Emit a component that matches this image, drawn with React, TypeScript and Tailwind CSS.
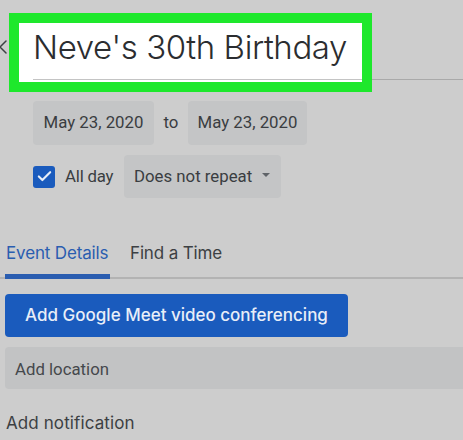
import React from "react";
import { Check, ChevronLeft } from "lucide-react";

const font = "font-['Roboto',sans-serif]";
const heading = "font-['Inter',sans-serif]";

export default function App() {
  return (
    <div className={`w-[463px] h-[440px] overflow-hidden bg-[#cdcdcd] ${font}`}>
      {/* Title row with green highlight */}
      <div className="flex items-start pt-[13px]">
        <div className="w-[9px] h-[68px] flex items-center overflow-hidden">
          <ChevronLeft size={24} strokeWidth={1.5} className="ml-[-9px] shrink-0 text-[#3c4043]" />
        </div>
        <div className="w-[363px] h-[79px] shrink-0 border-[10px] border-[#1ee82c] bg-white pl-[14px]">
          <div className={`h-[57px] border-b border-[#c4c4c4] text-[33px] font-light leading-[48px] text-[#2b2d30] tracking-[-0.4px] whitespace-nowrap ${heading}`}>
            Neve's 30th Birthday
          </div>
        </div>
        <div className="flex-1 h-[67px] border-b border-[#a9a9a9]" />
      </div>

      {/* Dates */}
      <div className="flex items-center mt-[9px] ml-[33px] text-[16.8px] text-[#3a3d41]">
        <div className="w-[121px] h-[44px] rounded bg-[#c4c5c6] flex items-center justify-center">May 23, 2020</div>
        <div className="w-[34px] text-center">to</div>
        <div className="w-[119px] h-[44px] rounded bg-[#c4c5c6] flex items-center justify-center">May 23, 2020</div>
      </div>

      {/* All day / repeat */}
      <div className="flex items-center mt-[10px] ml-[33px] text-[16.8px] text-[#3a3d41]">
        <div className="w-[22px] h-[22px] rounded-[3px] bg-[#1a5bbd] flex items-center justify-center">
          <Check size={17} strokeWidth={3} className="text-[#e6eef8]" />
        </div>
        <div className="ml-[10px] w-[59px] tracking-[-0.2px]">All day</div>
        <div className="w-[157px] h-[43px] rounded bg-[#c4c5c6] flex items-center pl-[10px]">
          Does not repeat
          <span className="ml-[10px] mb-[3px] w-0 h-0 border-x-[4px] border-x-transparent border-t-[4px] border-t-[#5f6368]" />
        </div>
      </div>

      {/* Tabs */}
      <div className={`mt-[43px] h-[38px] border-b-2 border-[#b3b3b3] flex items-start pl-[5px] text-[17px] tracking-[-0.15px] ${heading}`}>
        <div className="w-[105px] h-[38px] border-b-[5px] border-[#2a5db0] rounded-t-[3px] text-[#2a5db0] leading-[24px] pl-px whitespace-nowrap">
          Event Details
        </div>
        <div className="ml-[20px] text-[#3c4043] leading-[24px]">Find a Time</div>
      </div>

      {/* Meet button */}
      <div className={`mt-[15px] ml-[5px] w-[343px] h-[43px] rounded bg-[#1a5bbd] flex items-center justify-center text-[17px] font-medium text-[#e8eef8] whitespace-nowrap ${heading}`}>
        Add Google Meet video conferencing
      </div>

      {/* Location */}
      <div className="mt-[10px] ml-[5px] h-[42px] rounded-l bg-[#c2c3c4] flex items-center pl-[10px] pt-[3px] text-[16.8px] text-[#45484c]">
        Add location
      </div>

      {/* Notification */}
      <div className={`mt-[22px] ml-[6px] text-[17px] tracking-[0.1px] leading-[24px] text-[#3c4043] ${heading}`}>
        Add notification
      </div>
    </div>
  );
}
